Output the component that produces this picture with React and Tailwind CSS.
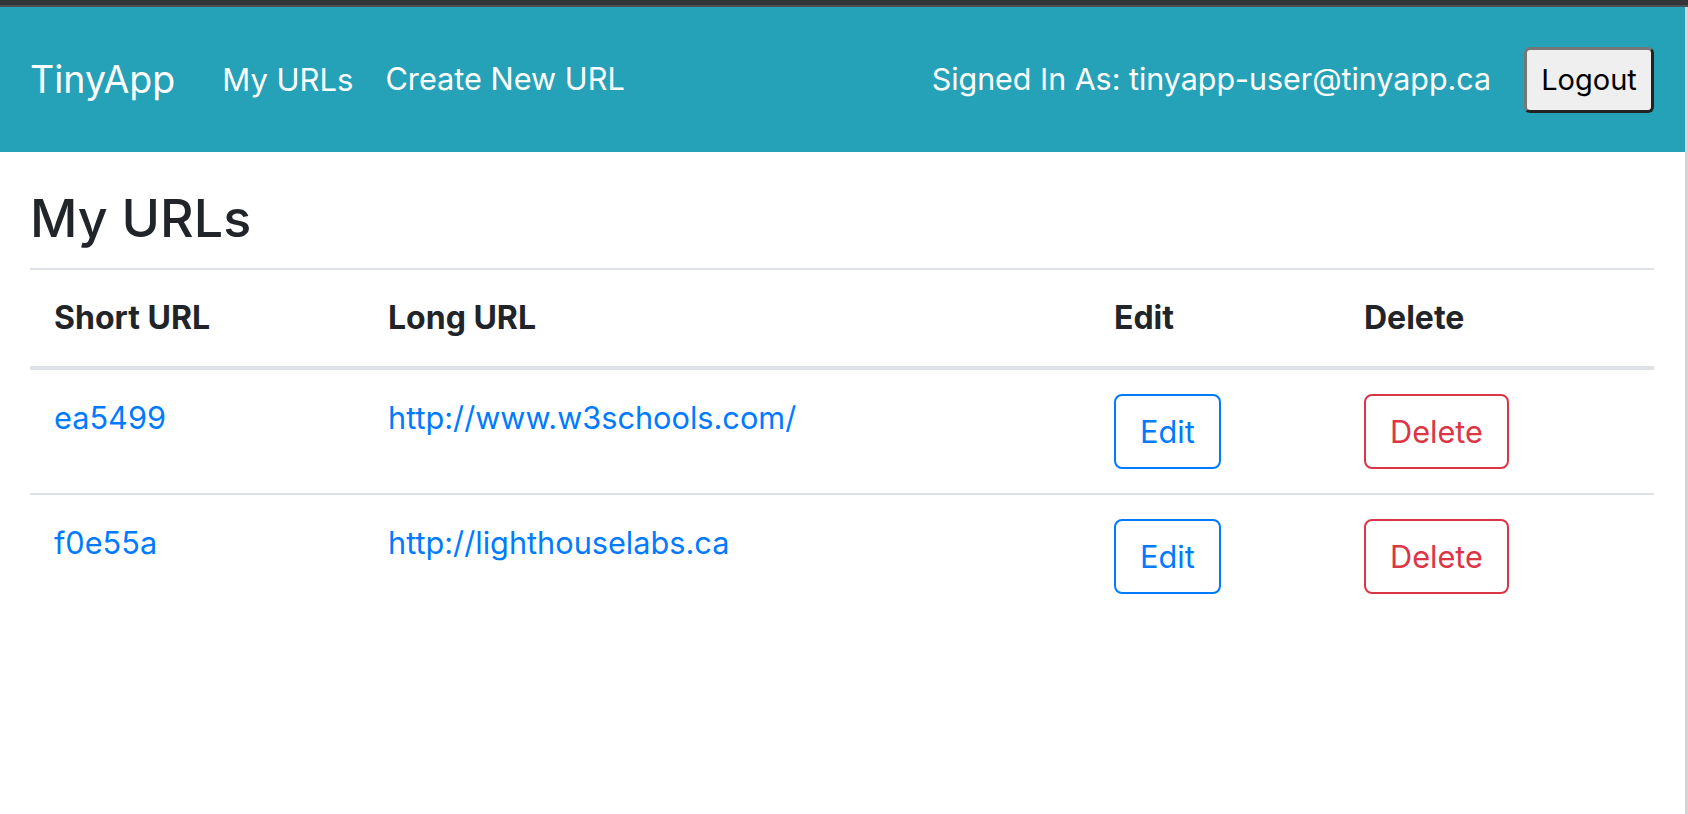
import React from "react";

const urls = [
  { id: "ea5499", longURL: "http://www.w3schools.com/" },
  { id: "f0e55a", longURL: "http://lighthouselabs.ca" },
];

const Navbar = () => {
  return (
    <nav className="h-[145px] bg-[#26a2b8] flex items-center pl-[30px] pr-[31px] text-white">
      <a href="#" className="text-[37.5px] leading-none mr-[47px]">
        TinyApp
      </a>
      <a href="#" className="text-[31px] leading-none mr-[32px]">
        My URLs
      </a>
      <a href="#" className="text-[30.7px] leading-none">
        Create New URL
      </a>
      <div className="ml-auto flex items-center gap-[33px]">
        <span className="text-[30.4px] leading-none">
          Signed In As: tinyapp-user@tinyapp.ca
        </span>
        <button className="w-[130px] h-[66px] bg-[#efefef] text-black text-[29px] leading-none rounded-[6px] border-[3px] border-t-[#777777] border-l-[#777777] border-b-[#222222] border-r-[#222222]">
          Logout
        </button>
      </div>
    </nav>
  );
};

const UrlTable = () => {
  return (
    <table className="w-full table-fixed border-collapse text-[30.7px] leading-[48px] text-[#212529]">
      <thead>
        <tr>
          <th className="w-[334px] text-left text-[32px] font-bold p-[24px] border-t-2 border-b-4 border-[#dee2e6]">
            Short URL
          </th>
          <th className="w-[726px] text-left text-[32px] font-bold p-[24px] border-t-2 border-b-4 border-[#dee2e6]">
            Long URL
          </th>
          <th className="w-[250px] text-left text-[32px] font-bold p-[24px] border-t-2 border-b-4 border-[#dee2e6]">
            Edit
          </th>
          <th className="text-left text-[32px] font-bold p-[24px] border-t-2 border-b-4 border-[#dee2e6]">
            Delete
          </th>
        </tr>
      </thead>
      <tbody>
        {urls.map((url) => (
          <tr key={url.id}>
            <td className="p-[24px] align-top border-t-2 border-[#dee2e6]">
              <a href="#" className="text-[#007bff]">
                {url.id}
              </a>
            </td>
            <td className="p-[24px] align-top border-t-2 border-[#dee2e6]">
              <a href="#" className="text-[#007bff]">
                {url.longURL}
              </a>
            </td>
            <td className="p-[24px] align-top border-t-2 border-[#dee2e6]">
              <button className="block px-[24px] py-[12px] border-2 border-[#007bff] rounded-[8px] text-[#007bff] leading-[47px]">
                Edit
              </button>
            </td>
            <td className="p-[24px] align-top border-t-2 border-[#dee2e6]">
              <button className="block px-[24px] py-[12px] border-2 border-[#dc3545] rounded-[8px] text-[#dc3545] leading-[47px]">
                Delete
              </button>
            </td>
          </tr>
        ))}
      </tbody>
    </table>
  );
};

export default function App() {
  return (
    <div className="min-h-screen bg-white font-['Inter','Noto_Sans',sans-serif] flex flex-col">
      <div className="h-[5px] bg-[#333438]"></div>
      <div className="h-[2px] bg-[#4d4e52]"></div>
      <div className="flex flex-1">
        <div className="flex-1">
          <Navbar />
          <main className="pl-[30px] pr-[31px]">
            <h1 className="text-[52px] leading-[62px] font-medium text-[#212529] mt-[36px] mb-[18px]">
              My URLs
            </h1>
            <UrlTable />
          </main>
        </div>
        <div className="w-[3px] bg-[#d4d4d4]"></div>
      </div>
    </div>
  );
}
